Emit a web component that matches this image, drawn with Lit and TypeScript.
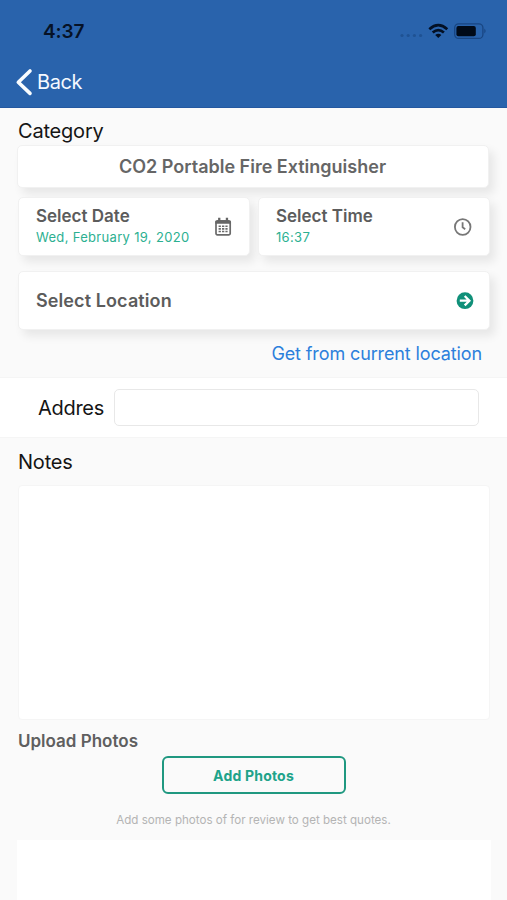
import { LitElement, html, css } from "lit";
import { customElement } from "lit/decorators.js";

@customElement("app-root")
export class AppRoot extends LitElement {
  static styles = css`
    :host {
      display: flex;
      flex-direction: column;
      width: 507px;
      height: 900px;
      overflow: hidden;
      box-sizing: border-box;
      background: #fafafa;
      color: #151515;
      font-family: Inter, "Liberation Sans", sans-serif;
      white-space: nowrap;
    }
    * { box-sizing: border-box; }
    svg { display: block; flex: none; }
    .header {
      flex: none;
      height: 108px;
      background: #2963ac;
      border-bottom: 1px solid #2458a0;
    }
    .status {
      display: flex;
      align-items: center;
      justify-content: space-between;
      height: 62px;
      padding: 0 20px 0 43px;
    }
    .clock { font-size: 19px; font-weight: 600; color: #061226; letter-spacing: -0.1px; }
    .back {
      display: flex;
      align-items: center;
      height: 39px;
      padding-left: 15px;
      gap: 4px;
      color: #f4f9ff;
      font-size: 20px;
      letter-spacing: -0.4px;
    }
    .label { flex: none; font-size: 20px; line-height: 24px; padding-left: 18px; letter-spacing: -0.2px; }
    .category { margin-top: 11px; }
    .card {
      display: flex;
      align-items: center;
      justify-content: space-between;
      background: #fff;
      border: 1px solid #f1f1f1;
      border-radius: 5px;
      box-shadow: 5px 6px 10px rgba(0, 0, 0, 0.08);
      color: #5c5c5c;
      font-size: 17px;
      font-weight: 600;
    }
    .choice {
      flex: none;
      justify-content: center;
      height: 43px;
      margin: 2px 18px 0 17px;
      padding-right: 1px;
      color: #666;
      font-size: 18px;
    }
    .row { flex: none; display: flex; gap: 8px; margin: 9px 17px 0 18px; }
    .row .card { height: 59px; flex: 1; padding: 0 17px; }
    .field { padding-bottom: 2px; }
    .title { line-height: 22px; }
    .value { font-size: 13px; font-weight: 400; line-height: 20px; color: #2cb091; letter-spacing: 0.32px; }
    .location {
      flex: none;
      height: 59px;
      margin: 15px 17px 0 18px;
      padding: 0 15px 0 17px;
      font-size: 18px;
      letter-spacing: 0.1px;
    }
    .link {
      flex: none;
      margin-top: 12px;
      padding-right: 25px;
      text-align: right;
      font-size: 18px;
      line-height: 24px;
      letter-spacing: -0.12px;
      color: #2c80dc;
    }
    .address {
      flex: none;
      display: flex;
      align-items: center;
      height: 61px;
      margin-top: 11px;
      padding: 0 28px 0 38px;
      background: #fff;
      border-top: 1px solid #f5f5f5;
      border-bottom: 1px solid #f5f5f5;
      font-size: 20px;
      letter-spacing: -0.3px;
    }
    .name { width: 76px; }
    .input { flex: 1; height: 37px; border: 1px solid #e8e8e8; border-radius: 5px; background: #fff; }
    .notes { margin-top: 12px; }
    .area {
      flex: none;
      height: 235px;
      margin: 11px 17px 0 18px;
      border: 1px solid #f5f5f5;
      border-radius: 4px;
      background: #fff;
    }
    .upload { flex: none; margin-top: 10px; padding-left: 18px; font-size: 17px; font-weight: 600; line-height: 22px; color: #5f5f5f; }
    .add {
      flex: none;
      display: flex;
      align-items: center;
      justify-content: center;
      align-self: center;
      width: 184px;
      height: 38px;
      margin-top: 4px;
      border: 2px solid #1f9880;
      border-radius: 6px;
      color: #20a38a;
      font-size: 14px;
      font-weight: 700;
      letter-spacing: 0.2px;
    }
    .hint { flex: none; margin-top: 17px; text-align: center; font-size: 11.6px; line-height: 18px; color: #b4b4b4; }
    .photos { flex: 1; margin: 11px 16px 0 17px; background: #fff; }
  `;

  render() {
    return html`
      <div class="header">
        <div class="status">
          <span class="clock">4:37</span>
          <svg width="88" height="18" viewBox="0 0 88 18">
            <g fill="#1f5293">
              <circle cx="3" cy="13.5" r="1.6" /><circle cx="9.2" cy="13.5" r="1.6" />
              <circle cx="15.4" cy="13.5" r="1.6" /><circle cx="21.6" cy="13.5" r="1.6" />
            </g>
            <g fill="none" stroke="#031024" stroke-width="2.7">
              <path d="M30.3 7.2Q39.3-.9 48.3 7.2" />
              <path d="M33.7 10.6Q39.3 5.6 44.9 10.6" />
            </g>
            <path d="M36.2 13Q39.3 10.4 42.4 13L39.3 16Z" fill="#031024" />
            <rect x="55.7" y="1.8" width="28.2" height="14.6" rx="4" fill="none" stroke="#194682" stroke-width="1.3" />
            <rect x="57.4" y="3.9" width="19.4" height="10.4" rx="2" fill="#000a18" />
            <path d="M85.3 6.6Q88 9.1 85.3 11.6Z" fill="#194682" />
          </svg>
        </div>
        <div class="back">
          <svg width="18" height="28" viewBox="0 0 18 28">
            <path d="M15 3L3.3 14.2L15 25.4" fill="none" stroke="#f8fcff" stroke-width="3.6" stroke-linecap="round" stroke-linejoin="round" />
          </svg>
          <span>Back</span>
        </div>
      </div>

      <div class="label category">Category</div>
      <div class="card choice">CO2 Portable Fire Extinguisher</div>

      <div class="row">
        <div class="card">
          <div class="field">
            <div class="title">Select Date</div>
            <div class="value">Wed, February 19, 2020</div>
          </div>
          <svg width="18" height="20" viewBox="0 0 18 20">
            <rect x="2" y="3.8" width="14.2" height="14" rx="1.3" fill="none" stroke="#6a6a6a" stroke-width="1.7" />
            <path d="M1.4 4h15.4v2.8H1.4zM4.1 .8h2.3v3.4H4.1zM11.8 .8h2.3v3.4h-2.3z" fill="#666" />
            <path d="M4.6 9.3h9M4.6 11.9h9M4.6 14.5h9" stroke="#6a6a6a" stroke-width="1.6" stroke-dasharray="2.3 1.1" />
          </svg>
        </div>
        <div class="card">
          <div class="field">
            <div class="title">Select Time</div>
            <div class="value">16:37</div>
          </div>
          <svg width="19" height="20" viewBox="0 0 19 20" fill="none" stroke="#777">
            <circle cx="9.7" cy="10" r="7.8" stroke-width="1.8" />
            <path d="M9.6 5.2V10.3L12.2 12.2" stroke-width="1.8" />
          </svg>
        </div>
      </div>

      <div class="card location">
        <span>Select Location</span>
        <svg width="18" height="18" viewBox="0 0 18 18">
          <circle cx="9" cy="8.7" r="8.4" fill="#109079" />
          <path d="M3.8 8.7H13M8.7 4L13.4 8.7L8.7 13.4" fill="none" stroke="#fff" stroke-width="2.3" />
        </svg>
      </div>
      <div class="link">Get from current location</div>

      <div class="address">
        <span class="name">Addres</span>
        <div class="input"></div>
      </div>

      <div class="label notes">Notes</div>
      <div class="area"></div>
      <div class="upload">Upload Photos</div>
      <div class="add">Add Photos</div>
      <div class="hint">Add some photos of for review to get best quotes.</div>
      <div class="photos"></div>
    `;
  }
}
